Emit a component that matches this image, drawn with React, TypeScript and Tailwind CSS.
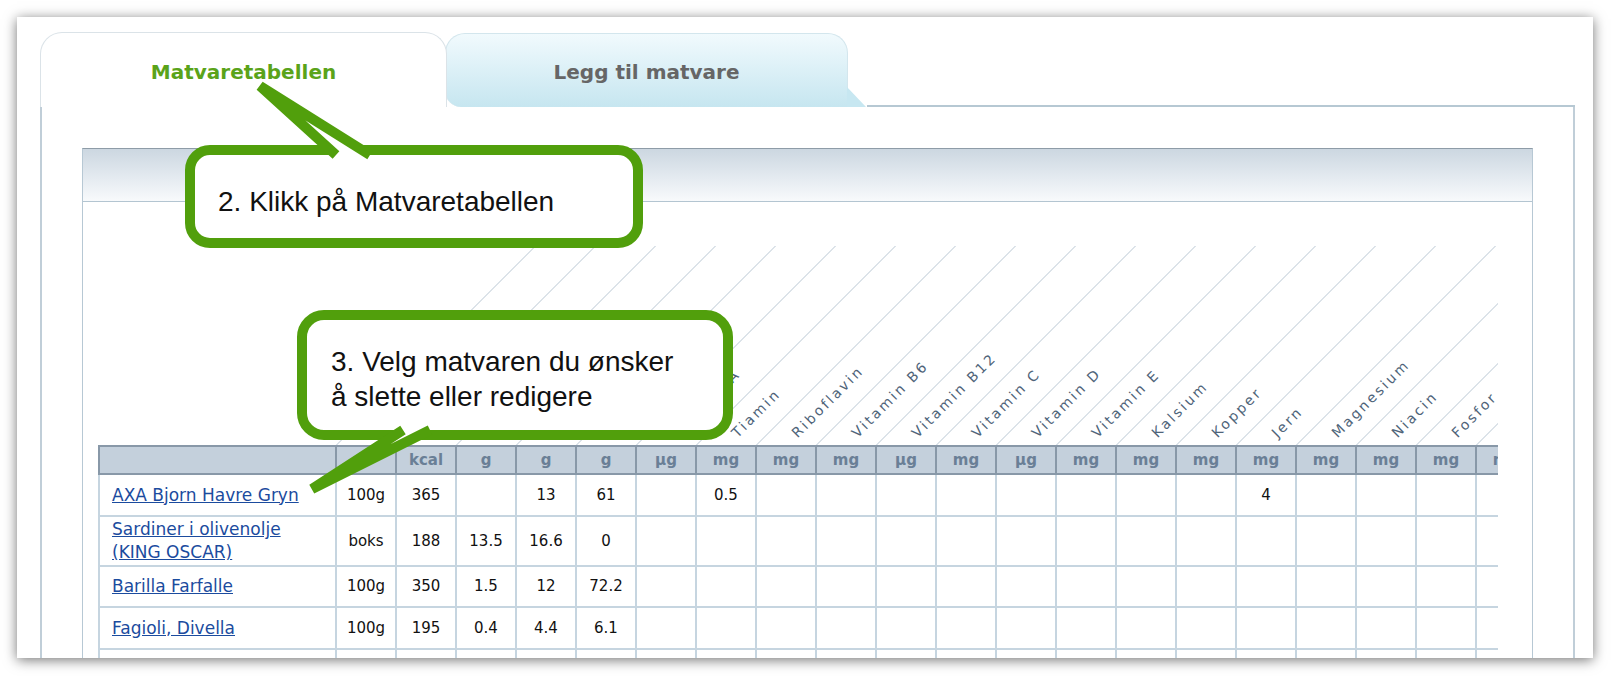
const GREEN = '#519f0c'

type Col = { unit: string; label: string }

const cols: Col[] = [
  { unit: '', label: '' },
  { unit: 'kcal', label: 'Energi' },
  { unit: 'g', label: 'Fett' },
  { unit: 'g', label: 'Protein' },
  { unit: 'g', label: 'Karbohydrat' },
  { unit: 'µg', label: 'Vitamin A' },
  { unit: 'mg', label: 'Tiamin' },
  { unit: 'mg', label: 'Riboflavin' },
  { unit: 'mg', label: 'Vitamin B6' },
  { unit: 'µg', label: 'Vitamin B12' },
  { unit: 'mg', label: 'Vitamin C' },
  { unit: 'µg', label: 'Vitamin D' },
  { unit: 'mg', label: 'Vitamin E' },
  { unit: 'mg', label: 'Kalsium' },
  { unit: 'mg', label: 'Kopper' },
  { unit: 'mg', label: 'Jern' },
  { unit: 'mg', label: 'Magnesium' },
  { unit: 'mg', label: 'Niacin' },
  { unit: 'mg', label: 'Fosfor' },
  { unit: 'mg', label: 'Kalium' },
]

type Row = { name: string[]; vals: Record<number, string>; h: string }

const rows: Row[] = [
  { name: ['AXA Bjorn Havre Gryn'], vals: { 0: '100g', 1: '365', 3: '13', 4: '61', 6: '0.5', 15: '4' }, h: 'h-[42px]' },
  { name: ['Sardiner i olivenolje', '(KING OSCAR)'], vals: { 0: 'boks', 1: '188', 2: '13.5', 3: '16.6', 4: '0' }, h: 'h-[50px]' },
  { name: ['Barilla Farfalle'], vals: { 0: '100g', 1: '350', 2: '1.5', 3: '12', 4: '72.2' }, h: 'h-[41px]' },
  { name: ['Fagioli, Divella'], vals: { 0: '100g', 1: '195', 2: '0.4', 3: '4.4', 4: '6.1' }, h: 'h-[42px]' },
  { name: [], vals: {}, h: 'h-[42px]' },
]

function FoodTable() {
  return (
    <table className="w-[1437px] table-fixed border-collapse">
      <colgroup>
        <col className="w-[237px]" />
        {cols.map((_, i) => (
          <col key={i} className="w-[60px]" />
        ))}
      </colgroup>
      <thead>
        {/* slanted column titles */}
        <tr className="h-[200px]">
          <th className="p-0" />
          {cols.map((c, i) => (
            <th key={i} className="relative p-0 align-bottom">
              <div className="absolute bottom-0 left-0 h-[200px] w-[60px] origin-bottom-left skew-x-[-45deg] border-l border-[#b9c8d4]" />
              {c.label && (
                <span className="absolute bottom-[5px] left-[43px] origin-bottom-left -rotate-45 whitespace-nowrap text-[14px] font-normal leading-none tracking-[2.5px] text-[#4f6479]">
                  {c.label}
                </span>
              )}
            </th>
          ))}
        </tr>
        <tr className="h-[28px] bg-[#c4d0dc]">
          <th className="border-2 border-[#8898a8] p-0" />
          {cols.map((c, i) => (
            <th key={i} className="border-2 border-[#8898a8] p-0 text-center text-[15px] font-bold text-[#6a7f96]">
              {c.unit}
            </th>
          ))}
        </tr>
      </thead>
      <tbody>
        {rows.map((r, ri) => (
          <tr key={ri} className={r.h}>
            <td className="border-2 border-[#c6d5e0] p-0 pl-[12px] text-left text-[17px] leading-[23px]">
              {r.name.length > 0 && (
                <a href="#" className="text-[#1b4b9e] underline">
                  {r.name.map((n, k) => (
                    <span key={k}>
                      {k > 0 && <br />}
                      {n}
                    </span>
                  ))}
                </a>
              )}
            </td>
            {cols.map((_, i) => (
              <td key={i} className="border-2 border-[#c6d5e0] p-0 text-center text-[15px] text-[#111]">
                {r.vals[i] ?? ''}
              </td>
            ))}
          </tr>
        ))}
      </tbody>
    </table>
  )
}

export default function App() {
  return (
    <div className="relative h-[676px] w-[1612px] overflow-hidden bg-white pl-[17px] pt-[17px] font-['DejaVu_Sans',sans-serif]">
      <div className="h-[641px] w-[1576px] overflow-hidden bg-white pl-[23px] pr-[18px] pt-[15px] shadow-[0_2px_12px_rgba(0,0,0,0.55)]">
        {/* tabs */}
        <div className="flex items-end">
          <div className="relative z-10 flex h-[75px] w-[407px] items-center justify-center rounded-t-[22px] border border-b-0 border-[#dbe3e8] bg-white pt-[3px] text-[20px] font-bold text-[#5aa31a]">
            Matvaretabellen
          </div>
          <div className="relative -ml-[2px] flex h-[74px] w-[403px] items-center justify-center rounded-t-[20px] rounded-bl-[16px] border border-b-0 border-[#d3e6ed] bg-gradient-to-b from-[#f1fafd] to-[#c6e6f0] pt-[2px] text-[20px] font-bold text-[#666]">
            Legg til matvare
            <div className="absolute -right-[19px] bottom-0 h-[20px] w-[19px] bg-[#c7e7f1] [clip-path:polygon(0_0,0_100%,100%_100%)]" />
          </div>
          <div className="ml-[19px] flex-1 border-b-2 border-[#b6c8d3]" />
        </div>

        {/* panel */}
        <div className="h-[600px] border-x-2 border-[#c0ced8] px-[40px] pt-[41px]">
          <div className="h-[560px] border border-[#b7c8d4] border-t-[#8e9ca7]">
            <div className="h-[53px] border-b border-[#b3c5d1] bg-gradient-to-b from-[#ccd7e1] to-[#f8fafc]" />
            <div className="pl-[15px] pt-[44px]">
              <div className="w-[1400px] overflow-hidden">
                <FoodTable />
              </div>
            </div>
          </div>
        </div>
      </div>

      {/* callouts */}
      <svg className="pointer-events-none absolute left-0 top-0 z-20" width="1612" height="676">
        <rect x="190" y="150" width="448" height="93" rx="20" fill="white" stroke={GREEN} strokeWidth="10" />
        <path d="M336 155 L260 86 L370 155" fill="white" stroke={GREEN} strokeWidth="10" strokeLinejoin="bevel" />
        <rect x="302" y="315" width="426" height="120" rx="22" fill="white" stroke={GREEN} strokeWidth="10" />
        <path d="M403 430 L312 489 L430 430" fill="white" stroke={GREEN} strokeWidth="10" strokeLinejoin="bevel" />
      </svg>
      <div className="absolute left-[218px] top-[184px] z-30 whitespace-nowrap font-['Liberation_Sans',Arial,sans-serif] text-[28px] leading-[35px] text-[#111]">
        2. Klikk på Matvaretabellen
      </div>
      <div className="absolute left-[331px] top-[344px] z-30 whitespace-nowrap font-['Liberation_Sans',Arial,sans-serif] text-[28px] leading-[35px] text-[#111]">
        3. Velg matvaren du ønsker
        <br />å slette eller redigere
      </div>
    </div>
  )
}
